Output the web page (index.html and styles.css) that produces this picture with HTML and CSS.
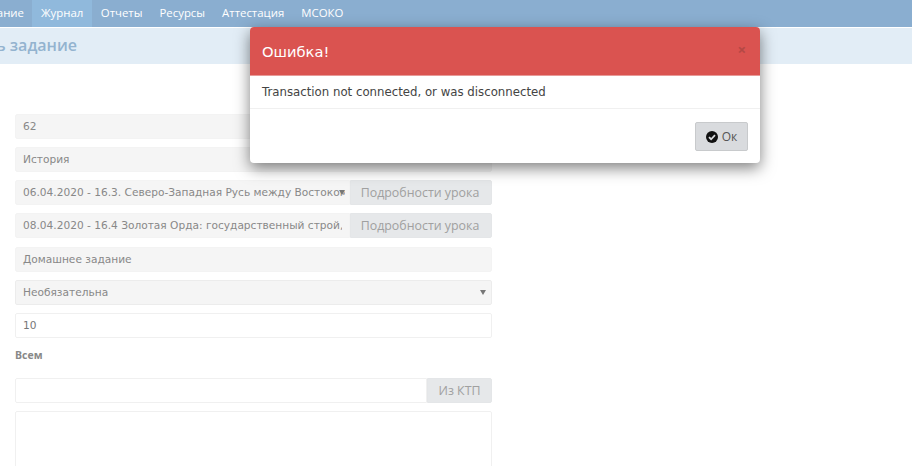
FILE: index.html
```html
<!DOCTYPE html>
<html lang="ru">
<head>
<meta charset="utf-8">
<title>Добавить задание</title>
<link rel="stylesheet" href="styles.css">
</head>
<body>
<nav class="nav">
  <a class="nav-item nav-cut"><span>Расписание</span></a>
  <a class="nav-item active">Журнал</a>
  <a class="nav-item">Отчеты</a>
  <a class="nav-item">Ресурсы</a>
  <a class="nav-item">Аттестация</a>
  <a class="nav-item">МСОКО</a>
</nav>
<header class="page-head"><h1 class="page-title"><span>Добавить задание</span></h1></header>
<main class="form">
  <div class="field disabled">62</div>
  <div class="field disabled">История</div>
  <div class="group">
    <div class="field disabled grow select-inline"><span class="clip">06.04.2020 - 16.3. Северо-Западная Русь между Востоком</span><i class="caret caret-over"></i></div>
    <div class="addon wide">Подробности урока</div>
  </div>
  <div class="group">
    <div class="field disabled grow"><span class="clip">08.04.2020 - 16.4 Золотая Орда: государственный строй,</span></div>
    <div class="addon wide">Подробности урока</div>
  </div>
  <div class="field disabled plain">Домашнее задание</div>
  <div class="field disabled select"><span>Необязательна</span><i class="caret"></i></div>
  <div class="field">10</div>
  <div class="label">Всем</div>
  <div class="group">
    <div class="field grow"></div>
    <div class="addon narrow">Из КТП</div>
  </div>
  <div class="field area"></div>
</main>
<section class="modal">
  <div class="modal-head">
    <h2 class="modal-title">Ошибка!</h2>
    <span class="close">×</span>
  </div>
  <div class="modal-body">Transaction not connected, or was disconnected</div>
  <div class="modal-foot">
    <button class="btn">
      <svg class="btn-icon" viewBox="0 0 16 16" width="12" height="12"><circle cx="8" cy="8" r="8" fill="#111"/><path d="M4 8.2l2.8 2.8L12 5.6" fill="none" stroke="#d9dbde" stroke-width="2.4"/></svg>
      Ок
    </button>
  </div>
</section>
</body>
</html>
```
FILE: styles.css
```css
html, body { margin: 0; padding: 0; height: 466px; overflow: hidden; background: #fff; }
body { font-family: "Open Sans", sans-serif; color: #555; position: relative; }

.nav { display: flex; height: 27px; background: #8aaed0; color: #fff; font-size: 11.4px; line-height: 26px; }
.nav-item { padding: 0 8.5px; white-space: nowrap; }
.nav-cut { width: 32px; padding: 0; display: flex; justify-content: flex-end; overflow: hidden; box-sizing: border-box; padding-right: 8px; }
.nav-cut span { flex: none; }
.active { background: #90b9dc; padding: 0 9px; }

.page-head { height: 36px; margin-top: 1px; background: #e2edf6; }
.page-title { margin: 0; width: 77px; height: 36px; display: flex; justify-content: flex-end; overflow: hidden; font-weight: 600; font-size: 16px; line-height: 35px; color: #93b3cf; }
.page-title span { flex: none; }

.form { width: 477px; height: 352.4px; overflow: hidden; margin: 49.6px 0 0 15px; font-family: "DejaVu Sans", sans-serif; font-size: 10.6px; color: #777; display: flex; flex-direction: column; gap: 8.3px; }
.field { box-sizing: border-box; height: 25px; flex: none; line-height: 23px; padding: 0 7px; border: 1px solid #f0f0f0; border-radius: 2px; background: #fff; white-space: nowrap; }
.disabled { background: #f5f5f5; border-color: #f3f3f3; color: #888; }
.group { display: flex; height: 25px; flex: none; }
.grow { flex: 1; min-width: 0; display: flex; align-items: center; border-radius: 2px 0 0 2px; }
.clip { flex: 1; min-width: 0; overflow: hidden; white-space: nowrap; }
.addon { box-sizing: border-box; height: 25px; line-height: 24px; background: #e6e8ea; border: 1px solid #e4e6e8; border-radius: 0 2px 2px 0; font-family: "Open Sans", sans-serif; font-size: 12.4px; color: #a0a0a0; text-align: center; }
.wide { width: 142px; padding-right: 2px; }
.narrow { width: 65px; }
.select { display: flex; justify-content: space-between; align-items: center; padding-right: 5px; border-color: #ececec; }
.select-inline { padding-right: 4px; }
.caret { flex: none; width: 0; height: 0; border-left: 3px solid transparent; border-right: 3px solid transparent; border-top: 5px solid #777; }
.caret-over { margin-left: -6px; }
.label { font-family: "Open Sans", sans-serif; font-size: 10.5px; font-weight: 700; color: #888; line-height: 14px; margin: 1px 0 8px; }
.area { height: 80px; }

.modal { position: absolute; left: 250px; top: 27px; width: 510px; height: 136px; background: #fff; border-radius: 4px; box-shadow: 0 5px 15px rgba(0,0,0,.5); overflow: hidden; display: flex; flex-direction: column; }
.modal-head { height: 49px; flex: none; background: #da5350; color: #fff; display: flex; justify-content: space-between; align-items: center; padding: 0 14px 0 12px; box-sizing: border-box; border-bottom: 1px solid #e89a98; }
.modal-title { margin: 0; font-family: "DejaVu Sans", sans-serif; font-weight: 400; font-size: 14.7px; }
.close { font-size: 15px; font-weight: 700; color: #b44845; line-height: 1; margin-top: -4px; }
.modal-body { height: 33px; box-sizing: border-box; flex: none; padding: 0 12px; line-height: 32px; font-family: "DejaVu Sans", sans-serif; font-size: 11.75px; color: #444; border-bottom: 1px solid #f0f0f0; }
.modal-foot { flex: 1; display: flex; justify-content: flex-end; align-items: center; padding: 1px 12px 0 0; }
.btn { display: flex; align-items: center; justify-content: center; gap: 4px; width: 53px; height: 29px; padding: 0; background: #d9dbde; border: 1px solid #c8cacc; border-radius: 2px; font-family: "Open Sans", sans-serif; font-size: 12px; color: #555; }
.btn-icon { flex: none; }
```
